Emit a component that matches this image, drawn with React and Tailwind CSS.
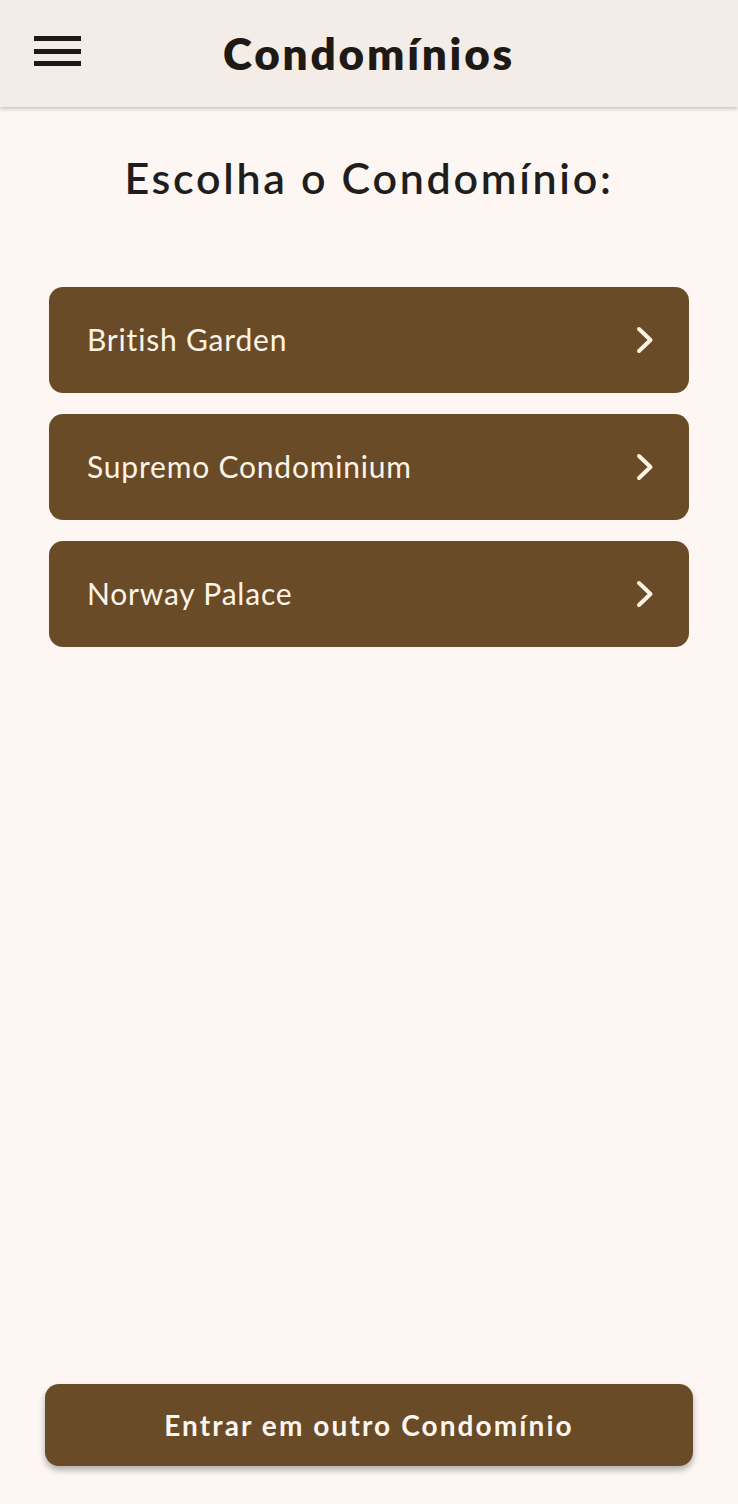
const condominios = ["British Garden", "Supremo Condominium", "Norway Palace"];

function Chevron() {
  return (
    <svg width="20" height="28" viewBox="0 0 20 28" fill="none" stroke="currentColor" strokeWidth="4" strokeLinecap="round" strokeLinejoin="round">
      <polyline points="4,3 15.5,14 4,25" />
    </svg>
  );
}

function App() {
  return (
    <div className="min-h-screen flex flex-col bg-[#fdf6f3] font-['Lato',sans-serif]">
      {/* Header */}
      <header className="relative h-[107px] flex items-center justify-center bg-[#f4ece6] shadow-[0_2px_4px_rgba(0,0,0,0.2)]">
        <button className="absolute left-[34px] top-[36px] flex flex-col gap-[7.5px]">
          <span className="block w-[47px] h-[5px] bg-[#1e1915]" />
          <span className="block w-[47px] h-[5px] bg-[#1e1915]" />
          <span className="block w-[47px] h-[5px] bg-[#1e1915]" />
        </button>
        <h1 className="text-[44px] font-extrabold text-[#1e1915] tracking-[2.8px] mb-[2px]">Condomínios</h1>
      </header>

      <h2 className="mt-[39px] text-center text-[43px] font-semibold text-[#1e1e1e] tracking-[2.7px]">
        Escolha o Condomínio:
      </h2>

      <div className="mt-[76px] px-[49px] flex flex-col gap-[21px]">
        {condominios.map((c) => (
          <button
            key={c}
            className="h-[106px] rounded-[14px] bg-[#6a4b27] flex items-center justify-between pl-[38px] pr-[34px] text-[#fdf3e7]"
          >
            <span className="text-[30px] font-normal tracking-[0.8px]">{c}</span>
            <Chevron />
          </button>
        ))}
      </div>

      <div className="flex-1" />

      <div className="px-[45px] pb-[38px]">
        <button className="w-full h-[82px] rounded-[14px] bg-[#6a4b27] text-[#fdf6ee] text-[28px] font-bold tracking-[2.1px] shadow-[0_4px_6px_rgba(0,0,0,0.3)]">
          Entrar em outro Condomínio
        </button>
      </div>
    </div>
  );
}

export default App;
